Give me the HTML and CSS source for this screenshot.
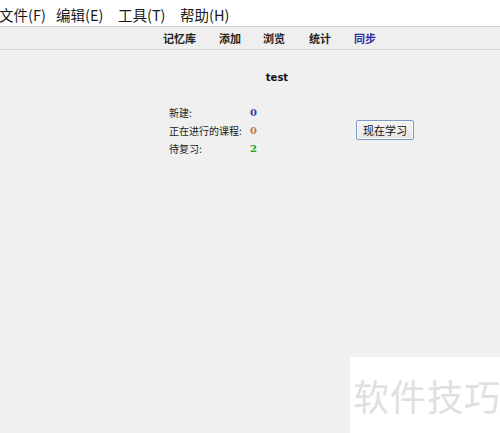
FILE: index.html
```html
<!DOCTYPE html>
<html>
<head>
<meta charset="utf-8">
<link rel="stylesheet" href="styles.css">
</head>
<body>
<div class="menubar">
  <span class="menu m1">文件(F)</span>
  <span class="menu m2">编辑(E)</span>
  <span class="menu m3">工具(T)</span>
  <span class="menu m4">帮助(H)</span>
</div>
<div class="toolbar">
  <span class="tool">记忆库</span>
  <span class="tool">添加</span>
  <span class="tool">浏览</span>
  <span class="tool">统计</span>
  <span class="tool sync">同步</span>
</div>
<div class="main">
  <div class="title">test</div>
  <div class="panel">
    <div class="stats">
      <div class="row"><span class="label">新建:</span><span class="val new">0</span></div>
      <div class="row"><span class="label">正在进行的课程:</span><span class="val learn">0</span></div>
      <div class="row"><span class="label">待复习:</span><span class="val due">2</span></div>
    </div>
    <button class="study">现在学习</button>
  </div>
</div>
<div class="watermark">软件技巧</div>
</body>
</html>
```
FILE: styles.css
```css
html, body {
  margin: 0;
  padding: 0;
  width: 500px;
  height: 433px;
  overflow: hidden;
  background: #f0f0f0;
  font-family: "Noto Sans CJK SC", "Noto Sans", sans-serif;
}
body { position: relative; }
.menubar {
  height: 26px;
  background: #ffffff;
  border-bottom: 1px solid #cfcfcf;
  display: flex;
  align-items: center;
  font-size: 14.5px;
  color: #1a1a1a;
}
.menu { white-space: nowrap; line-height: 26px; padding-top: 3px; }
.m1 { width: 57px; margin-left: -1px; }
.m2 { width: 62px; }
.m3 { width: 62px; }
.m4 { width: 70px; }
.toolbar {
  height: 22px;
  background: #efefef;
  border-bottom: 1px solid #d6d6d6;
  display: flex;
  align-items: center;
  padding-left: 163px;
  font-size: 11px;
  font-weight: bold;
  color: #222;
}
.tool { margin-right: 23px; line-height: 22px; }
.tool:nth-child(2) { margin-right: 22px; }
.tool:nth-child(3) { margin-right: 24px; }
.sync { color: #2a2aa0; }
.main {
  padding-top: 21px;
}
.title {
  text-align: center;
  font-family: "DejaVu Sans", sans-serif;
  font-weight: bold;
  font-size: 10px;
  color: #111;
  padding-left: 54px;
  line-height: 14px;
}
.panel {
  display: flex;
  margin-top: 18px;
  padding-left: 169px;
}
.stats { width: 187px; }
.row {
  display: flex;
  height: 18px;
  align-items: center;
  font-size: 10px;
  color: #222;
}
.label { width: 81px; }
.val {
  font-family: "DejaVu Serif", serif;
  font-weight: bold;
  font-size: 10px;
}
.new { color: #3a3aa8; }
.learn { color: #c07a48; }
.due { color: #2aa02a; }
.study {
  margin-top: 17px;
  height: 20px;
  width: 58px;
  padding: 0;
  font-family: "Noto Sans CJK SC", sans-serif;
  font-size: 11px;
  color: #111;
  background: linear-gradient(#f6f6f6, #e4e4e4);
  border: 1px solid #7a9cc4;
  border-radius: 2px;
  box-shadow: inset 0 0 0 1px #fbfbfb;
}
.watermark {
  position: absolute;
  left: 350px;
  top: 357px;
  width: 150px;
  height: 76px;
  background: #ffffff;
  color: #e0e0e0;
  font-size: 36px;
  line-height: 76px;
  padding-left: 3px;
  box-sizing: border-box;
  white-space: nowrap;
  letter-spacing: 1px;
}
```
